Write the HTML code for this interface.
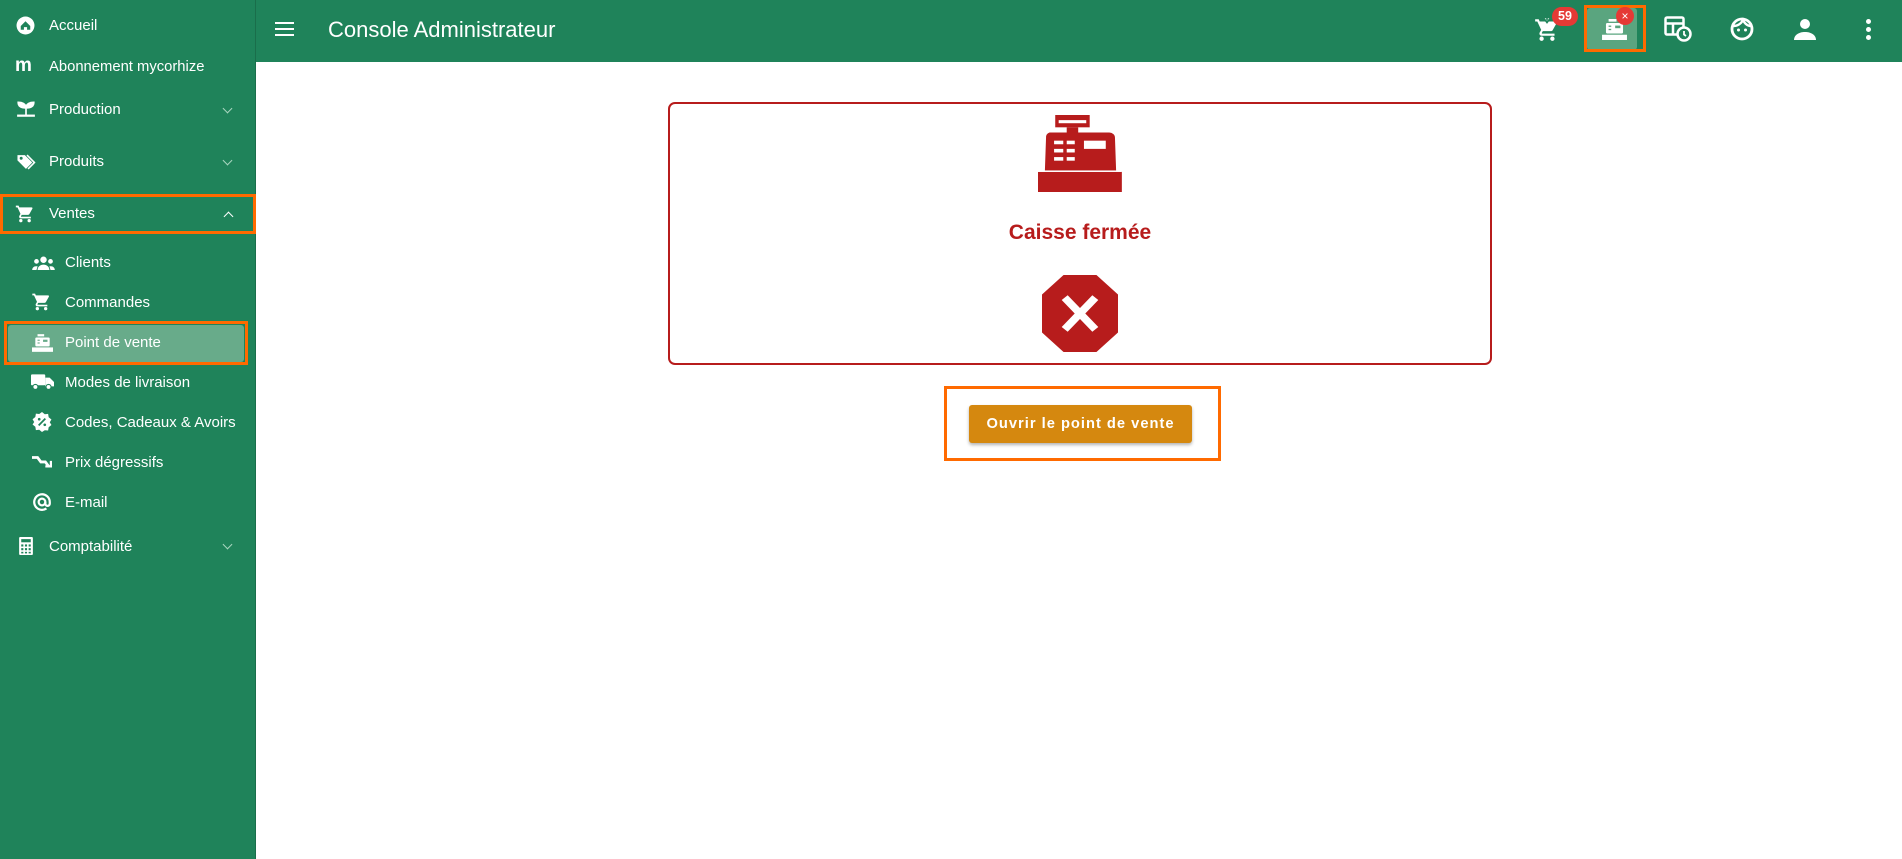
<!DOCTYPE html>
<html><head><meta charset="utf-8">
<style>
*{margin:0;padding:0;box-sizing:border-box}
body{width:1902px;height:859px;overflow:hidden;background:#fff;font-family:"Liberation Sans",sans-serif;position:relative}
.side{position:absolute;left:0;top:0;width:256px;height:859px;background:#1f835a;border-right:1px solid #1a6e4b}
.top{position:absolute;left:256px;top:0;right:0;height:62px;background:#1f835a}
.it{position:absolute;color:#fff;font-size:15px;white-space:nowrap;line-height:18px;margin-top:2px}
.ic{position:absolute}
.chev{position:absolute;left:224px;width:7px;height:7px;border-right:1.5px solid #a8d5bf;border-bottom:1.5px solid #a8d5bf;transform:rotate(45deg);margin-top:2px}
.ob{position:absolute;border:3px solid #ff6a00}
</style></head><body>
<div class="side">
  <svg class="ic" style="left:16px;top:16px" width="19" height="19" viewBox="0 0 18 18"><circle cx="9" cy="9" r="8.5" fill="#fff"/><path d="M4.5 9.5L9 5l4.5 4.5V13h-3v-2.5h-3V13h-3z" fill="#1f835a"/></svg>
  <div class="it" style="left:49px;top:15px">Accueil</div>
  <div class="it" style="left:15px;top:55px;font-weight:bold;font-size:19px">m</div>
  <div class="it" style="left:49px;top:56px;font-size:14.8px">Abonnement mycorhize</div>
  <svg class="ic" style="left:16px;top:100px" width="20" height="18" viewBox="0 0 18 16"><path d="M9 14V7M9 7C9 3 5 2 2 2c0 3 2 5 7 5zM9 7c0-4 4-5 7-5 0 3-2 5-7 5z" fill="#fff" stroke="#fff" stroke-width="1.5"/><rect x="1" y="13" width="16" height="2" fill="#fff"/></svg>
  <div class="it" style="left:49px;top:99px">Production</div>
  <div class="chev" style="top:103px"></div>
  <svg class="ic" style="left:16px;top:153px" width="22" height="18" viewBox="0 0 20 17"><path d="M1 2h7l7 7-6 6-8-8z" fill="#fff"/><circle cx="4.5" cy="5" r="1.4" fill="#1f835a"/><path d="M10 2l7 7-6 6" fill="none" stroke="#fff" stroke-width="1.5"/></svg>
  <div class="it" style="left:49px;top:151px">Produits</div>
  <div class="chev" style="top:155px"></div>
  <div class="ob" style="left:0;top:194px;width:256px;height:40px"></div>
  <svg class="ic" style="left:14px;top:204px" width="22" height="20" viewBox="0 0 24 24"><path fill="#fff" d="M17 18a2 2 0 110 4 2 2 0 010-4M1 2h3.3l.9 2H20a1 1 0 011 1c0 .2-.1.3-.1.5l-3.6 6.5c-.3.6-1 1-1.7 1H8.1l-.9 1.6V15a.3.3 0 00.3.3H19v2H7a2 2 0 01-1.8-3l1.4-2.5L3 4H1zm6 16a2 2 0 110 4 2 2 0 010-4"/></svg>
  <div class="it" style="left:49px;top:203px">Ventes</div>
  <div style="position:absolute;left:225px;top:213px;width:7px;height:7px;border-left:1.5px solid #fff;border-top:1.5px solid #fff;transform:rotate(45deg)"></div>
  <svg class="ic" style="left:32px;top:256px" width="23" height="14" viewBox="0 0 21 13"><circle cx="10.5" cy="3.5" r="3" fill="#fff"/><circle cx="4" cy="5" r="2.2" fill="#fff"/><circle cx="17" cy="5" r="2.2" fill="#fff"/><path d="M5 13c0-3 2.5-5 5.5-5s5.5 2 5.5 5zM0 13c0-2 1.5-3.5 3.5-3.5H5L4 13zM21 13c0-2-1.5-3.5-3.5-3.5H16l1 3.5z" fill="#fff"/></svg>
  <div class="it" style="left:65px;top:252px">Clients</div>
  <svg class="ic" style="left:31px;top:292px" width="21" height="20" viewBox="0 0 24 24"><path fill="#fff" d="M17 18a2 2 0 110 4 2 2 0 010-4M1 2h3.3l.9 2H20a1 1 0 011 1c0 .2-.1.3-.1.5l-3.6 6.5c-.3.6-1 1-1.7 1H8.1l-.9 1.6V15a.3.3 0 00.3.3H19v2H7a2 2 0 01-1.8-3l1.4-2.5L3 4H1zm6 16a2 2 0 110 4 2 2 0 010-4"/></svg>
  <div class="it" style="left:65px;top:292px">Commandes</div>
  <div style="position:absolute;left:8px;top:325px;width:236px;height:37px;background:#68ab8a;border-radius:3px"></div>
  <div class="ob" style="left:4px;top:321px;width:244px;height:44px"></div>
  <svg class="ic" style="left:32px;top:334px" width="21" height="18" viewBox="0 0 19 16"><rect x="5" y="0" width="6" height="2" fill="#fff"/><rect x="3" y="3" width="13" height="8" rx="1" fill="#fff"/><rect x="0" y="12" width="19" height="4" fill="#fff"/><rect x="5" y="5" width="2" height="1" fill="#68ab8a"/><rect x="5" y="7.5" width="2" height="1" fill="#68ab8a"/><rect x="10" y="5" width="4" height="2" fill="#68ab8a"/></svg>
  <div class="it" style="left:65px;top:332px">Point de vente</div>
  <svg class="ic" style="left:31px;top:374px" width="23" height="16" viewBox="0 0 21 14"><rect x="0" y="0" width="13" height="10" rx="1" fill="#fff"/><path d="M13 3h4l4 4v4h-8z" fill="#fff"/><circle cx="4" cy="11.5" r="2.3" fill="#fff" stroke="#1f835a"/><circle cx="16" cy="11.5" r="2.3" fill="#fff" stroke="#1f835a"/></svg>
  <div class="it" style="left:65px;top:372px">Modes de livraison</div>
  <svg class="ic" style="left:32px;top:412px" width="20" height="20" viewBox="0 0 18 18"><path d="M9 0l2.5 2 3-.3.5 3 2.5 2-1.5 2.5 1.5 2.5-2.5 2-.5 3-3-.3L9 18l-2.5-2-3 .3-.5-3L.5 11.3 2 9 .5 6.5 3 4.5l.5-3 3 .3z" fill="#fff"/><path d="M6 12l6-6" stroke="#1f835a" stroke-width="1.6"/><circle cx="6.5" cy="6.5" r="1.2" fill="#1f835a"/><circle cx="11.5" cy="11.5" r="1.2" fill="#1f835a"/></svg>
  <div class="it" style="left:65px;top:412px">Codes, Cadeaux &amp; Avoirs</div>
  <svg class="ic" style="left:32px;top:454px" width="20" height="17" viewBox="0 0 18 15"><path d="M0 3h5l3 4h4l3 4" fill="none" stroke="#fff" stroke-width="2.5"/><path d="M12 11h5V6" fill="none" stroke="#fff" stroke-width="2"/></svg>
  <div class="it" style="left:65px;top:452px">Prix dégressifs</div>
  <svg class="ic" style="left:32px;top:492px" width="20" height="20" viewBox="0 0 18 18"><circle cx="9" cy="9" r="3" fill="none" stroke="#fff" stroke-width="2"/><path d="M12 9v1.5a2 2 0 004 0V9a7 7 0 10-3 5.8" fill="none" stroke="#fff" stroke-width="2"/></svg>
  <div class="it" style="left:65px;top:492px">E-mail</div>
  <svg class="ic" style="left:19px;top:537px" width="14" height="18" viewBox="0 0 13 17"><rect width="13" height="17" rx="1" fill="#fff"/><rect x="2" y="2" width="9" height="3" fill="#1f835a"/><g fill="#1f835a"><rect x="2" y="7" width="2" height="2"/><rect x="5.5" y="7" width="2" height="2"/><rect x="9" y="7" width="2" height="2"/><rect x="2" y="10.5" width="2" height="2"/><rect x="5.5" y="10.5" width="2" height="2"/><rect x="9" y="10.5" width="2" height="2"/><rect x="2" y="14" width="2" height="1.5"/><rect x="5.5" y="14" width="2" height="1.5"/><rect x="9" y="14" width="2" height="1.5"/></g></svg>
  <div class="it" style="left:49px;top:536px">Comptabilité</div>
  <div class="chev" style="top:539px"></div>
</div>
<div class="top">
  <div style="position:absolute;left:19px;top:22px;width:19px;height:2px;background:#fff;box-shadow:0 6px 0 #fff,0 12px 0 #fff"></div>
  <div style="position:absolute;left:72px;top:17px;color:#fff;font-size:22px">Console Administrateur</div>
  <svg class="ic" style="left:1278px;top:15px" width="26" height="28" viewBox="0 0 24 26"><path fill="#fff" d="M17 20a2 2 0 110 4 2 2 0 010-4M1 4h3.3l.9 2H20a1 1 0 011 1c0 .2-.1.3-.1.5l-3.6 6.5c-.3.6-1 1-1.7 1H8.1l-.9 1.6V17a.3.3 0 00.3.3H19v2H7a2 2 0 01-1.8-3l1.4-2.5L3 6H1zm6 16a2 2 0 110 4 2 2 0 010-4"/><path d="M12 0v5M9 3l3 4 3-4" stroke="#1f835a" stroke-width="1.5" fill="#fff"/></svg>
  <div style="position:absolute;left:1296px;top:7px;width:26px;height:19px;border-radius:10px;background:#e53935;color:#fff;font-size:12.5px;font-weight:bold;text-align:center;line-height:19px">59</div>
  <div style="position:absolute;left:1331px;top:8px;width:50px;height:42px;background:#5aa57f;border-radius:3px"></div>
  <div class="ob" style="left:1328px;top:5px;width:62px;height:47px"></div>
  <svg class="ic" style="left:1346px;top:19px" width="25" height="21" viewBox="0 0 19 16"><rect x="5" y="0" width="6" height="2" fill="#fff"/><rect x="3" y="3" width="13" height="8" rx="1" fill="#fff"/><rect x="0" y="12" width="19" height="4" fill="#fff"/><rect x="5" y="5" width="2" height="1" fill="#5aa57f"/><rect x="5" y="7.5" width="2" height="1" fill="#5aa57f"/><rect x="10" y="5" width="4" height="2" fill="#5aa57f"/></svg>
  <div style="position:absolute;left:1360px;top:7px;width:18px;height:18px;border-radius:50%;background:#e53935;color:#fff;font-size:12px;text-align:center;line-height:18px">×</div>
  <svg class="ic" style="left:1408px;top:16px" width="28" height="26" viewBox="0 0 28 26"><rect x="1.5" y="1.5" width="18" height="17" rx="1.5" fill="none" stroke="#fff" stroke-width="2.5"/><path d="M1.5 7.5h18M9 7.5v11" stroke="#fff" stroke-width="2.5"/><circle cx="20" cy="18" r="6.5" fill="#1f835a" stroke="#fff" stroke-width="2.5"/><path d="M20 15v3.5l2 1.5" stroke="#fff" stroke-width="1.8" fill="none"/></svg>
  <svg class="ic" style="left:1473px;top:17px" width="26" height="24" viewBox="0 0 26 24"><circle cx="13" cy="12" r="10" fill="none" stroke="#fff" stroke-width="2.8"/><path d="M4 9c4 0 8-2 10-6 2 4 5 6 8 6" fill="none" stroke="#fff" stroke-width="2.5"/><circle cx="9.5" cy="13" r="1.5" fill="#fff"/><circle cx="16.5" cy="13" r="1.5" fill="#fff"/></svg>
  <svg class="ic" style="left:1538px;top:18px" width="22" height="22" viewBox="0 0 22 22"><circle cx="11" cy="6" r="5" fill="#fff"/><path d="M0 22c0-5 5-8 11-8s11 3 11 8z" fill="#fff"/></svg>
  <div style="position:absolute;left:1610px;top:19px;width:5px;height:5px;border-radius:50%;background:#fff;box-shadow:0 8px 0 #fff,0 16px 0 #fff"></div>
</div>
<div style="position:absolute;left:668px;top:102px;width:824px;height:263px;border:2px solid #b71c1c;border-radius:7px"></div>
<svg class="ic" style="left:1038px;top:115px" width="85" height="77" viewBox="0 0 74 75" preserveAspectRatio="none"><g fill="#b71c1c"><rect x="15" y="0" width="30" height="12"/><rect x="25" y="12" width="10" height="6"/><path d="M10 17h52a5 5 0 015 5l1 32H6l1-32a5 5 0 013-5z"/><rect x="0" y="55" width="73" height="20"/></g><rect x="18" y="5" width="24" height="3" fill="#fff"/><g fill="#fff"><rect x="14" y="25" width="8" height="3.5"/><rect x="25" y="25" width="7" height="3.5"/><rect x="14" y="33" width="8" height="3.5"/><rect x="25" y="33" width="7" height="3.5"/><rect x="14" y="41" width="8" height="3.5"/><rect x="25" y="41" width="7" height="3.5"/><rect x="40" y="25" width="19" height="8"/></g><rect x="0" y="54" width="73" height="1.5" fill="#fff"/></svg>
<div style="position:absolute;left:668px;top:221px;width:824px;text-align:center;color:#b71c1c;font-size:21px;font-weight:bold">Caisse fermée</div>
<svg class="ic" style="left:1042px;top:275px" width="76" height="77" viewBox="0 0 67 75" preserveAspectRatio="none"><path d="M19 0h29l19 19v37L48 75H19L0 56V19z" fill="#b71c1c"/><path d="M20 22l27 31M47 22L20 53" stroke="#fff" stroke-width="7"/></svg>
<div class="ob" style="left:944px;top:386px;width:277px;height:75px"></div>
<div style="position:absolute;left:969px;top:405px;width:223px;height:38px;background:#d5880f;border-radius:3px;box-shadow:0 2px 3px rgba(0,0,0,.3);color:#fff;font-size:14.7px;font-weight:bold;letter-spacing:1px;text-align:center;line-height:38px">Ouvrir le point de vente</div>
</body></html>
